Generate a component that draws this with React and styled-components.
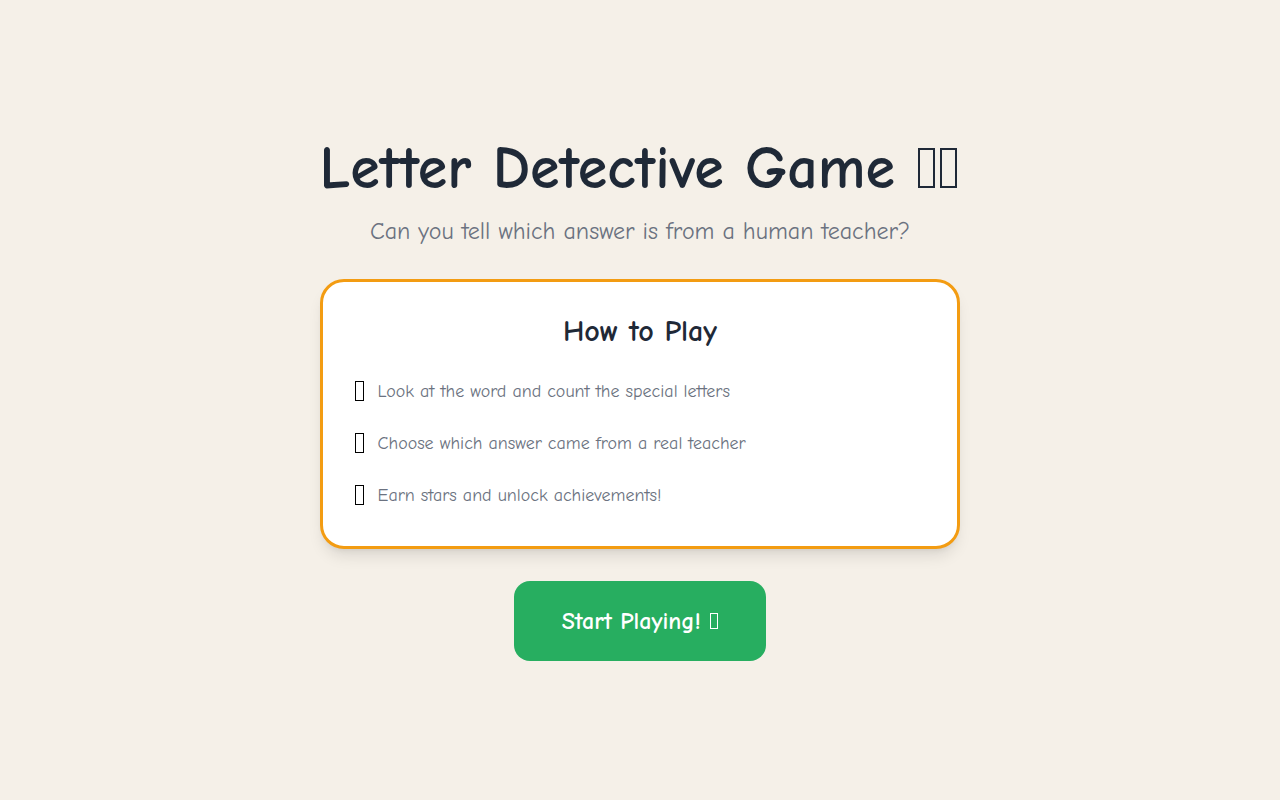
import React from "react";
import styled, { createGlobalStyle } from "styled-components";

const GlobalStyle = createGlobalStyle`
  *, *::before, *::after { box-sizing: border-box; }
  body {
    margin: 0;
    background: #f5f0e8;
    font-family: "Comic Neue", "Comic Sans MS", "Lato", sans-serif;
    color: #1f2937;
  }
  h1, h2, p, ul { margin: 0; padding: 0; }
`;

const Page = styled.main`
  min-height: 100vh;
  display: flex;
  align-items: center;
  justify-content: center;
  padding: 32px;
`;

const Content = styled.div`
  display: flex;
  flex-direction: column;
  align-items: center;
`;

const Title = styled.h1`
  font-size: 60px;
  line-height: 60px;
  font-weight: 700;
  margin-bottom: 16px;
  text-align: center;
`;

const Subtitle = styled.p`
  font-size: 24px;
  line-height: 32px;
  color: #6b7280;
  margin-bottom: 32px;
  text-align: center;
`;

const Card = styled.section`
  align-self: stretch;
  background: #fff;
  border: 3px solid #f39c12;
  border-radius: 24px;
  padding: 32px;
  margin-bottom: 32px;
  box-shadow: 0 10px 15px -3px rgba(0, 0, 0, 0.1),
    0 4px 6px -4px rgba(0, 0, 0, 0.1);
`;

const CardTitle = styled.h2`
  font-size: 30px;
  line-height: 36px;
  text-align: center;
  margin-bottom: 24px;
`;

const Steps = styled.ul`
  list-style: none;
  display: flex;
  flex-direction: column;
  gap: 16px;
`;

const Step = styled.li`
  display: flex;
  align-items: center;
  gap: 12px;
  font-size: 18px;
  line-height: 28px;
  color: #6b7280;
`;

const StepIcon = styled.span`
  font-size: 30px;
  line-height: 36px;
  color: #000;
`;

const glyphSizes = {
  small: { width: 8, height: 16, stroke: 1, margin: "0 0 0 1px" },
  medium: { width: 9, height: 20, stroke: 1, margin: "0 2px 0 0" },
  large: { width: 17, height: 40, stroke: 2, margin: "0 3px 0 2px" },
};

// Outlined box that stands on the text baseline like a letter.
const BoxGlyph = styled.span.attrs({ "aria-hidden": true })`
  display: inline-block;
  width: ${({ $size }) => glyphSizes[$size].width}px;
  height: ${({ $size }) => glyphSizes[$size].height}px;
  margin: ${({ $size }) => glyphSizes[$size].margin};
  border: ${({ $size }) => glyphSizes[$size].stroke}px solid currentColor;
`;

const StartButton = styled.button`
  border: 0;
  border-radius: 16px;
  background: #27ae60;
  color: #fff;
  font: inherit;
  font-size: 24px;
  line-height: 32px;
  font-weight: 700;
  padding: 24px 48px;
  cursor: pointer;
`;

const steps = [
  "Look at the word and count the special letters",
  "Choose which answer came from a real teacher",
  "Earn stars and unlock achievements!",
];

export default function App() {
  return (
    <Page>
      <GlobalStyle />
      <Content>
        <Title>
          Letter Detective Game <BoxGlyph $size="large" />
          <BoxGlyph $size="large" />
        </Title>
        <Subtitle>Can you tell which answer is from a human teacher?</Subtitle>
        <Card>
          <CardTitle>How to Play</CardTitle>
          <Steps>
            {steps.map((text) => (
              <Step key={text}>
                <StepIcon>
                  <BoxGlyph $size="medium" />
                </StepIcon>
                <span>{text}</span>
              </Step>
            ))}
          </Steps>
        </Card>
        <StartButton type="button">
          Start Playing! <BoxGlyph $size="small" />
        </StartButton>
      </Content>
    </Page>
  );
}
